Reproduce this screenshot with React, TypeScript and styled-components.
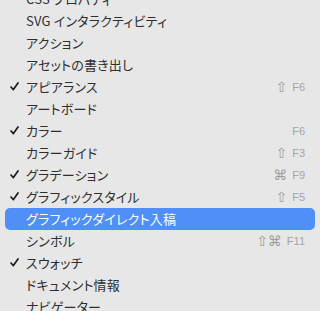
import styled, { createGlobalStyle } from "styled-components";

const GlobalStyle = createGlobalStyle`
  html, body {
    margin: 0;
    padding: 0;
    background: #e7e7e7;
    overflow: hidden;
  }
`;

const Menu = styled.div`
  width: 320px;
  height: 311px;
  overflow: hidden;
  background: #e7e7e7;
  box-sizing: border-box;
  padding: 0 5px;
  font-family: "Noto Sans CJK JP", "Liberation Sans", sans-serif;
`;

const List = styled.ul`
  list-style: none;
  margin: -12.5px 0 0;
  padding: 0;
`;

const Row = styled.li<{ $active?: boolean }>`
  display: flex;
  align-items: center;
  height: 22px;
  padding-right: 10px;
  border-radius: 5px;
  background: ${(p) => (p.$active ? "#4f8ff7" : "transparent")};
  color: ${(p) => (p.$active ? "#ffffff" : "#2e2e2e")};
`;

const CheckSlot = styled.span`
  width: 21px;
  flex: none;
  display: flex;
  align-items: center;
  padding-left: 5px;
  box-sizing: border-box;
`;

const Label = styled.span`
  flex: 1;
  font-size: 13px;
  font-feature-settings: "palt";
  letter-spacing: 0.2px;
  white-space: nowrap;
`;

const Shortcut = styled.span`
  display: flex;
  align-items: center;
  gap: 5px;
  font-family: "Liberation Sans", "DejaVu Sans", sans-serif;
  font-size: 11px;
  color: #a4a4a4;
`;

const Mod = styled.span`
  font-family: "DejaVu Sans", sans-serif;
  font-size: 14px;
  line-height: 1;
  color: #9c9c9c;
`;

const Check = () => (
  <svg width="9" height="9" viewBox="0 0 9 9">
    <path d="M1 5 L3.4 7.6 L8 1" fill="none" stroke="#1e1e1e" strokeWidth="1.7" strokeLinecap="round" strokeLinejoin="round" />
  </svg>
);

interface Item {
  label: string;
  checked?: boolean;
  mods?: string;
  key?: string;
  active?: boolean;
}

const items: Item[] = [
  { label: "CSS プロパティ" },
  { label: "SVG インタラクティビティ" },
  { label: "アクション" },
  { label: "アセットの書き出し" },
  { label: "アピアランス", checked: true, mods: "⇧", key: "F6" },
  { label: "アートボード" },
  { label: "カラー", checked: true, key: "F6" },
  { label: "カラーガイド", mods: "⇧", key: "F3" },
  { label: "グラデーション", checked: true, mods: "⌘", key: "F9" },
  { label: "グラフィックスタイル", checked: true, mods: "⇧", key: "F5" },
  { label: "グラフィックダイレクト入稿", active: true },
  { label: "シンボル", mods: "⇧⌘", key: "F11" },
  { label: "スウォッチ", checked: true },
  { label: "ドキュメント情報" },
  { label: "ナビゲーター" },
];

export default function App() {
  return (
    <>
      <GlobalStyle />
      <Menu>
        <List>
          {items.map((it) => (
            <Row key={it.label} $active={it.active}>
              <CheckSlot>{it.checked && <Check />}</CheckSlot>
              <Label>{it.label}</Label>
              {it.key && (
                <Shortcut>
                  {it.mods && <Mod>{it.mods}</Mod>}
                  {it.key}
                </Shortcut>
              )}
            </Row>
          ))}
        </List>
      </Menu>
    </>
  );
}
